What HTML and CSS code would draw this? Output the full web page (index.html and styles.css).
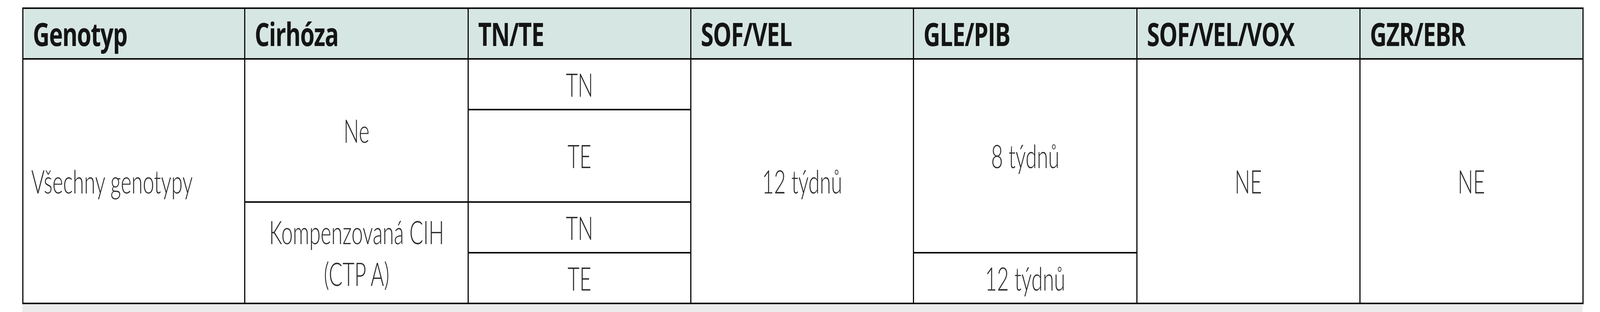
FILE: index.html
```html
<!DOCTYPE html>
<html lang="cs">
<head>
<meta charset="utf-8">
<title>Tabulka</title>
<link rel="stylesheet" href="styles.css">
</head>
<body>
<div class="frame">
  <table class="regimens">
    <colgroup>
      <col class="c1"><col class="c2"><col class="c3"><col class="c4"><col class="c5"><col class="c6"><col class="c7">
    </colgroup>
    <thead>
      <tr class="row-head">
        <th><span class="ht">Genotyp</span></th>
        <th><span class="ht">Cirhóza</span></th>
        <th><span class="ht">TN/TE</span></th>
        <th><span class="ht">SOF/VEL</span></th>
        <th><span class="ht">GLE/PIB</span></th>
        <th><span class="ht">SOF/VEL/VOX</span></th>
        <th><span class="ht">GZR/EBR</span></th>
      </tr>
    </thead>
    <tbody>
      <tr class="row-a">
        <td rowspan="4"><div class="cell left"><span class="t">Všechny genotypy</span></div></td>
        <td rowspan="2"><div class="cell"><span class="t">Ne</span></div></td>
        <td><div class="cell"><span class="t">TN</span></div></td>
        <td rowspan="4"><div class="cell"><span class="t">12 týdnů</span></div></td>
        <td rowspan="3"><div class="cell"><span class="t">8 týdnů</span></div></td>
        <td rowspan="4"><div class="cell"><span class="t">NE</span></div></td>
        <td rowspan="4"><div class="cell"><span class="t">NE</span></div></td>
      </tr>
      <tr class="row-b">
        <td><div class="cell"><span class="t">TE</span></div></td>
      </tr>
      <tr class="row-c">
        <td rowspan="2"><div class="cell"><span class="t">Kompenzovaná CIH<br>(CTP A)</span></div></td>
        <td><div class="cell"><span class="t">TN</span></div></td>
      </tr>
      <tr class="row-d">
        <td><div class="cell"><span class="t">TE</span></div></td>
        <td><div class="cell"><span class="t">12 týdnů</span></div></td>
      </tr>
    </tbody>
  </table>
  <div class="under"></div>
</div>
</body>
</html>
```
FILE: styles.css
```css
html, body {
  margin: 0;
  padding: 0;
  background: #ffffff;
}

.frame {
  padding: 19px 0 0 57px;
  width: 3994px;
}

.regimens {
  border-collapse: collapse;
  table-layout: fixed;
  width: 3994px;
  font-size: 82px;
  line-height: 1.3;
  border-top: 4px solid #0d0d0d;
  border-bottom: 4px solid #0d0d0d;
  border-left: 3px solid #0d0d0d;
  border-right: 3px solid #0d0d0d;
}

.c1 { width: 568px; }
.c2 { width: 572px; }
.c3 { width: 570px; }
.c4 { width: 570px; }
.c5 { width: 572px; }
.c6 { width: 571px; }
.c7 { width: 571px; }

.regimens th {
  font-family: "Open Sans", "Noto Sans", sans-serif;
  background: #d6e6e2;
  color: #141414;
  font-weight: 700;
  text-align: left;
  padding: 0 0 0 24px;
  border-top: 4px solid #0d0d0d;
  border-bottom: 4px solid #0d0d0d;
  border-left: 3px solid #0d0d0d;
  border-right: 3px solid #0d0d0d;
  vertical-align: middle;
  white-space: nowrap;
}

.ht {
  display: inline-block;
  letter-spacing: -2px;
  transform: scaleX(0.726);
  transform-origin: 0 50%;
}

.regimens td {
  font-family: Lato, "Open Sans", sans-serif;
  color: #2b2b2b;
  font-weight: 300;
  vertical-align: middle;
  padding: 0;
  border-top: 4px solid #0d0d0d;
  border-bottom: 4px solid #0d0d0d;
  border-left: 3px solid #0d0d0d;
  border-right: 3px solid #0d0d0d;
}

.cell {
  display: flex;
  justify-content: center;
  text-align: center;
}

.cell.left {
  justify-content: flex-start;
  text-align: left;
  padding-left: 20px;
}

.t {
  display: inline-block;
  flex-shrink: 0;
  white-space: nowrap;
  transform: scaleX(0.64);
  transform-origin: 50% 50%;
}

.cell.left .t {
  transform-origin: 0 50%;
}

.row-head { height: 130px; }
.row-a { height: 130px; }
.row-b { height: 237px; }
.row-c { height: 130px; }
.row-d { height: 130px; }

.under {
  height: 20px;
  background: #ececec;
}
```
